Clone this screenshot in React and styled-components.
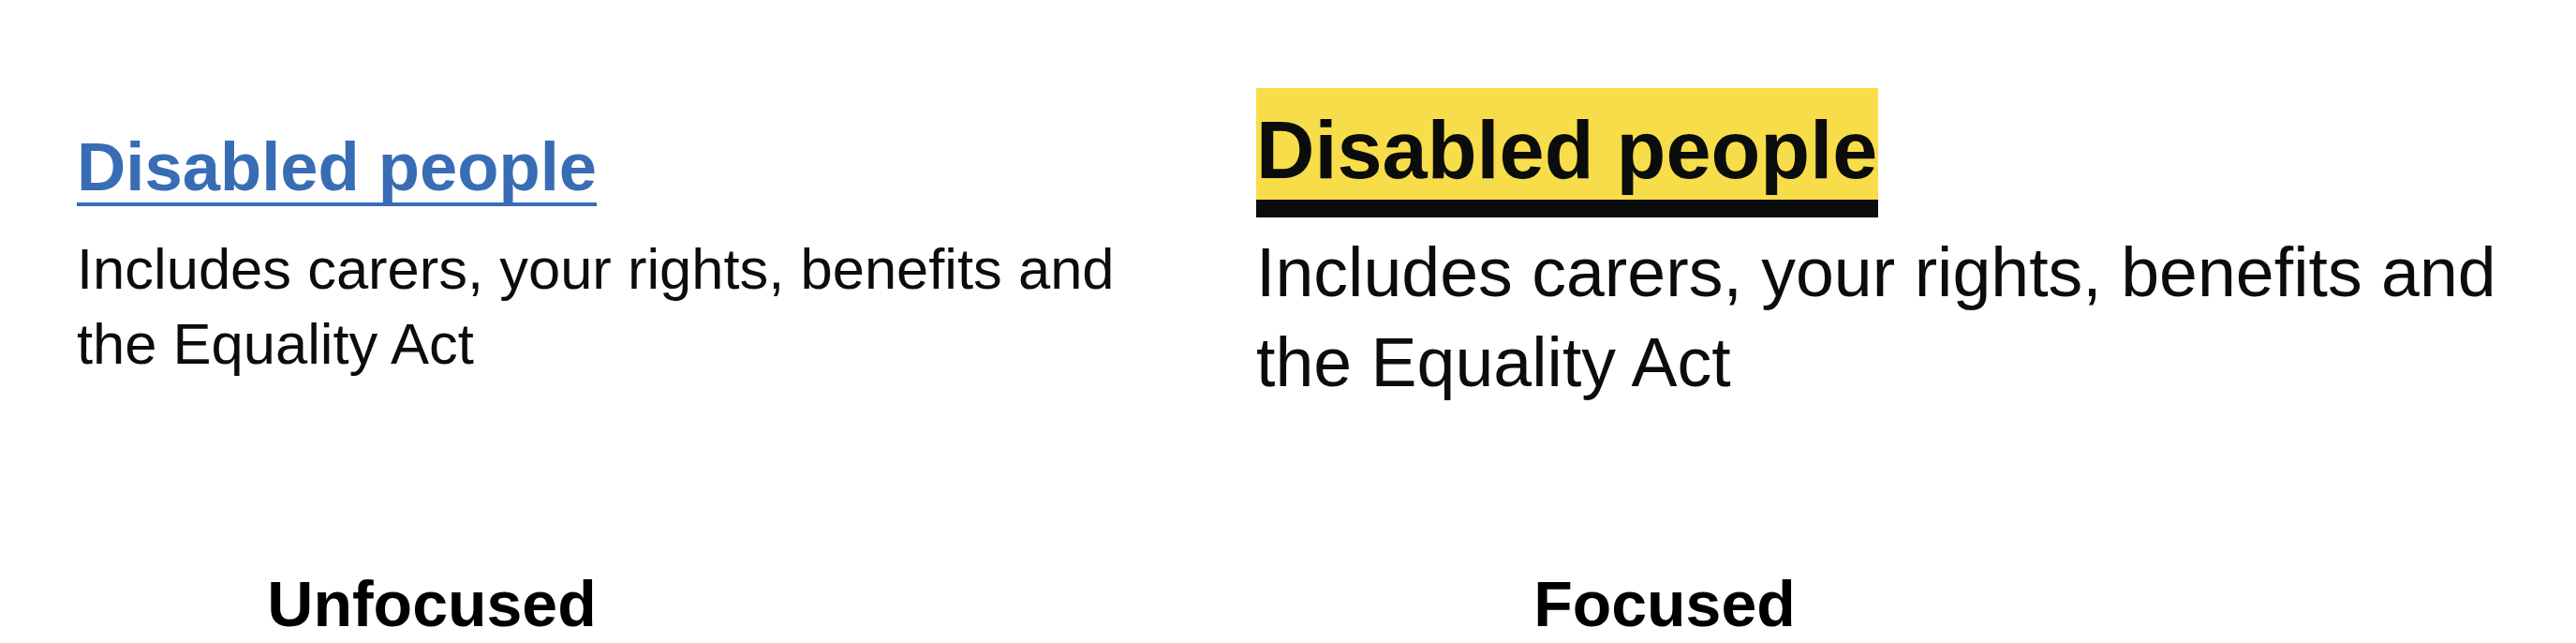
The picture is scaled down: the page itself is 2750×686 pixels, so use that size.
import React from "react";
import styled, { createGlobalStyle } from "styled-components";

const GlobalStyle = createGlobalStyle`
  html, body {
    margin: 0;
    padding: 0;
    background: #ffffff;
  }
  body {
    font-family: "Liberation Sans", Arial, sans-serif;
    color: #0b0c0c;
  }
`;

const Page = styled.main`
  display: grid;
  grid-template-columns: 1259px 1491px;
  height: 686px;
`;

const Panel = styled.section`
  display: flex;
  flex-direction: column;
  padding-top: ${(p) => p.$top}px;
  padding-left: 82px;
  box-sizing: border-box;
  height: 100%;
  min-width: 0;
`;

const Heading = styled.h2`
  margin: 0;
  font-weight: 700;
  font-size: ${(p) => p.$size}px;
  line-height: ${(p) => p.$lh}px;
`;

/* default link state */
const TopicLink = styled.a`
  color: #386db5;
  text-decoration: underline;
  text-decoration-thickness: 4px;
  text-underline-offset: 13px;
  text-decoration-skip-ink: none;
`;

/* keyboard focus state: yellow fill with thick black bar under it */
const FocusedLink = styled.a`
  display: inline-block;
  color: #0b0c0c;
  text-decoration: none;
  background: #f8dd4a;
  padding: 16px 1px 3px 0;
  border-bottom: 19px solid #0c0c0c;
  line-height: 100px;
`;

const Description = styled.p`
  margin: ${(p) => p.$gap}px 0 0;
  font-size: ${(p) => p.$size}px;
  line-height: ${(p) => p.$lh}px;
  max-width: ${(p) => p.$width}px;
  color: #0b0c0c;
`;

const Caption = styled.div`
  margin-top: auto;
  margin-left: ${(p) => p.$shift}px;
  width: ${(p) => p.$width}px;
  padding-bottom: 8px;
  text-align: center;
  font-size: 68px;
  line-height: 68px;
  font-weight: 700;
  color: #000000;
`;

export default function App() {
  return (
    <>
      <GlobalStyle />
      <Page>
        <Panel $top={133}>
          <Heading $size={72.4} $lh={90}>
            <TopicLink href="#disabled">Disabled people</TopicLink>
          </Heading>
          <Description $gap={24} $size={61.5} $lh={80} $width={1160}>
            Includes carers, your rights, benefits and the Equality Act
          </Description>
          <Caption $shift={-82} $width={922}>Unfocused</Caption>
        </Panel>
        <Panel $top={91}>
          <Heading $size={86.5} $lh={138}>
            <FocusedLink href="#disabled">Disabled people</FocusedLink>
          </Heading>
          <Description $gap={11} $size={73.5} $lh={96} $width={1390}>
            Includes carers, your rights, benefits and the Equality Act
          </Description>
          <Caption $shift={0} $width={872}>Focused</Caption>
        </Panel>
      </Page>
    </>
  );
}
